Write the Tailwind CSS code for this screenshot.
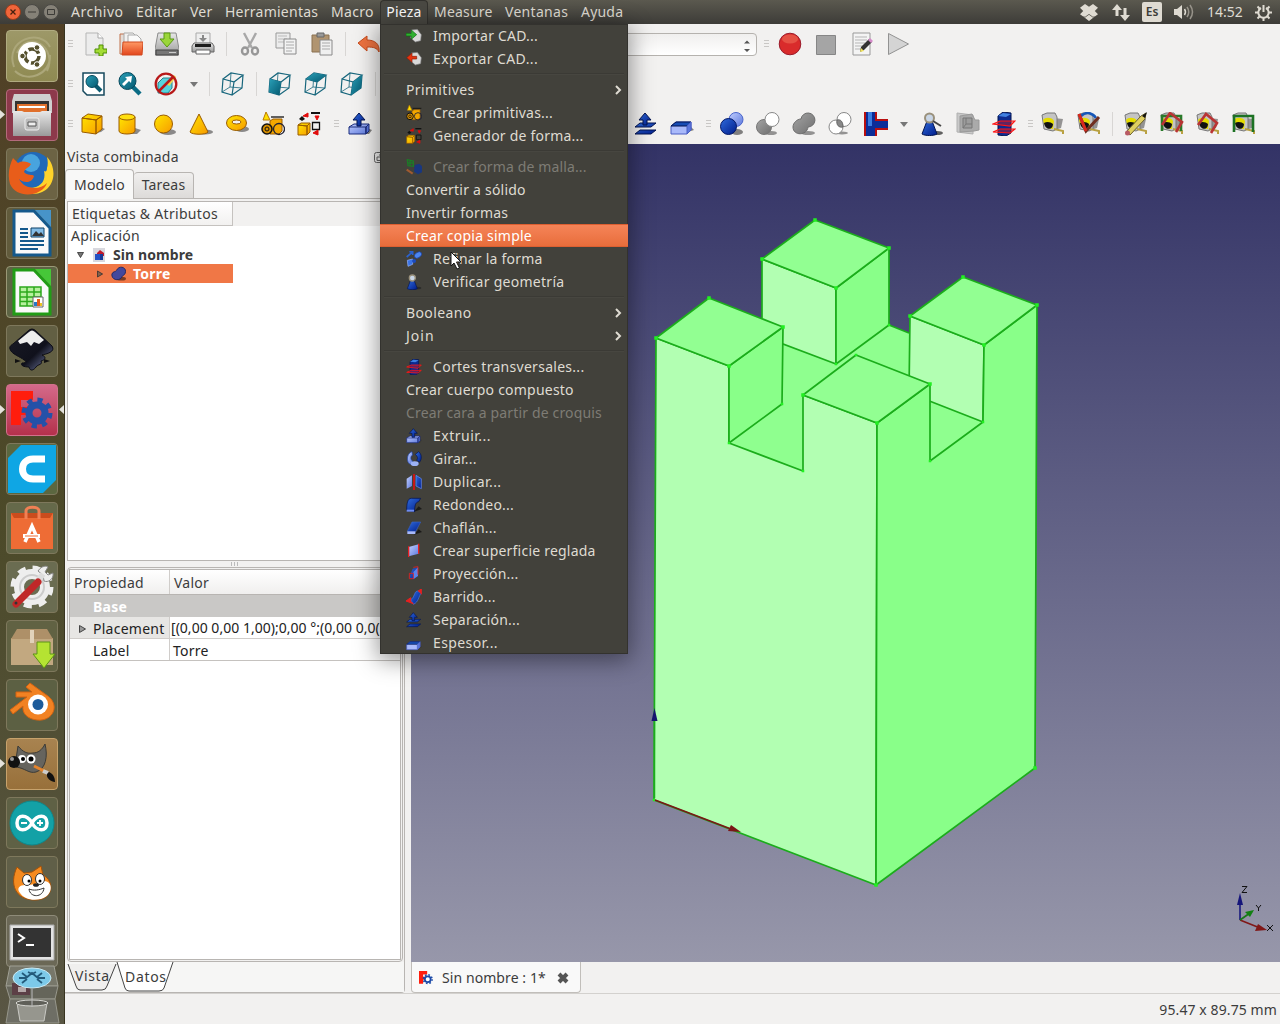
<!DOCTYPE html>
<html lang="es">
<head>
<meta charset="utf-8">
<title>FreeCAD</title>
<script src="https://cdn.jsdelivr.net/npm/@tailwindcss/browser@4"></script>
</head>
<body class="w-[1280px] h-[1024px] overflow-hidden bg-[#f2f1f0] text-[#3c3c3c] text-[14px] leading-[20px] font-['Noto_Sans',sans-serif] whitespace-nowrap">

<svg class="absolute size-0">
  <defs>
    <linearGradient id="gy" x1="0" y1="0" x2="1" y2="1"><stop offset="0" stop-color="#ffe600"/><stop offset="1" stop-color="#f79a00"/></linearGradient>
    <linearGradient id="gb" x1="0" y1="0" x2="1" y2="1"><stop offset="0" stop-color="#2f6bdc"/><stop offset="1" stop-color="#001c8a"/></linearGradient>
    <linearGradient id="gl" x1="0" y1="0" x2="1" y2="1"><stop offset="0" stop-color="#c3d0ff"/><stop offset="1" stop-color="#5a76dc"/></linearGradient>
    <linearGradient id="gg" x1="0" y1="0" x2="1" y2="1"><stop offset="0" stop-color="#a5a5a5"/><stop offset="1" stop-color="#6e6e6e"/></linearGradient>
    <linearGradient id="gt" x1="0" y1="0" x2="1" y2="1"><stop offset="0" stop-color="#2aa0b8"/><stop offset="1" stop-color="#04586f"/></linearGradient>
    <linearGradient id="go" x1="0" y1="0" x2="0" y2="1"><stop offset="0" stop-color="#ff9a66"/><stop offset="1" stop-color="#e2451c"/></linearGradient>
    <linearGradient id="gs" x1="0" y1="0" x2="0" y2="1"><stop offset="0" stop-color="#e8e8e8"/><stop offset="1" stop-color="#9a9a9a"/></linearGradient>
    <linearGradient id="gk" x1="0" y1="0" x2="1" y2="1"><stop offset="0" stop-color="#1a1b26"/><stop offset=".6" stop-color="#10111c"/><stop offset="1" stop-color="#7c86b4"/></linearGradient>
  </defs>
  <!-- file toolbar -->
  <symbol id="new" viewBox="0 0 24 24"><path d="M3 1h12l5 5v17H3z" fill="#ececec" stroke="#b5b5b5"/><path d="M15 1v5h5" fill="#fff" stroke="#a9a9a9"/><path d="M16 13h4v4h4v4h-4v3h-4v-3h-4v-4h4z" fill="#a4dc35" stroke="#4e8f05"/></symbol>
  <symbol id="open" viewBox="0 0 24 24"><path d="M1 22V2h6l2 3v17z" fill="#e4ddd8" stroke="#c1714a"/><path d="M5 1h9l4 4v15H5z" fill="#f2f2f2" stroke="#aaa"/><path d="M9 3h9l4 4v10H9z" fill="#fafafa" stroke="#aaa"/><path d="M4 10h20l-1 13H3z" fill="url(#go)" stroke="#d04a20"/></symbol>
  <symbol id="save" viewBox="0 0 24 24"><path d="M3 1h18l3 16v6H0v-6z" fill="url(#gs)" stroke="#8a8a8a"/><path d="M1 18h22v5H1z" fill="#777" stroke="#444"/><path d="M14 20.500h7" stroke="#ccc"/><path d="M9 1h6v6h4l-7 8-7-8h4z" fill="#9bd63a" stroke="#5a9a12"/></symbol>
  <symbol id="print" viewBox="0 0 24 24"><path d="M5 1h14v11H5z" fill="#eee" stroke="#aaa"/><path d="M11 3h2v3h3l-4 4-4-4h3z" fill="#888"/><path d="M3 11h18l2 3v6H1v-6z" fill="url(#gs)" stroke="#666"/><path d="M4 12h16v3H4z" fill="#1c1c1c"/><path d="M5 18h14v4H5z" fill="#fff" stroke="#666"/></symbol>
  <symbol id="cut" viewBox="0 0 24 24"><path d="M6 1l8 15M18 1l-8 15" stroke="#a8a8a8" stroke-width="2.400" fill="none"/><ellipse cx="7" cy="19" rx="3" ry="3.500" fill="none" stroke="#979797" stroke-width="2.400"/><ellipse cx="17" cy="19" rx="3" ry="3.500" fill="none" stroke="#979797" stroke-width="2.400"/></symbol>
  <symbol id="copy" viewBox="0 0 24 24"><path d="M2 1h14v15H2z" fill="#ececec" stroke="#999"/><path d="M4 4h9M4 7h9M4 10h9" stroke="#bbb"/><path d="M10 7h12v15H10z" fill="#f3f3f3" stroke="#8a8a8a"/><path d="M12 10h8M12 13h8M12 16h8M12 19h6" stroke="#aaa"/></symbol>
  <symbol id="paste" viewBox="0 0 24 24"><path d="M2 3h17v17H2z" fill="#b09470" stroke="#8a7050"/><path d="M7 1h7v4H7z" fill="#999" stroke="#666"/><path d="M10 8h12v15H10z" fill="#f0f0f0" stroke="#8a8a8a"/><path d="M12 11h8M12 14h8M12 17h8" stroke="#aaa"/></symbol>
  <symbol id="undo" viewBox="0 0 24 24"><path d="M1 11l9-7v4c8 0 13 4 12 12-2-4-5-5-12-5v4z" fill="#ee7340" stroke="#c94c1c"/></symbol>
  <symbol id="rec" viewBox="0 0 24 24"><circle cx="12" cy="12" r="10.800" fill="#d92b2b" stroke="#9b1b2b"/><ellipse cx="12" cy="7" rx="8" ry="4.500" fill="#ec6a55" opacity=".6"/></symbol>
  <symbol id="stop" viewBox="0 0 24 24"><path d="M2.500 3.500h19v19h-19z" fill="#a5a5a5" stroke="#868686"/></symbol>
  <symbol id="macro" viewBox="0 0 24 24"><path d="M3 1h17v22H3z" fill="#f4f4f4" stroke="#999"/><path d="M5 5h12M5 8h12M5 11h10M5 14h8M5 17h6" stroke="#b5b5b5"/><path d="M10 20l1-5 8-8 3 3-8 8z" fill="#333"/><path d="M10 20l1-4 3 3z" fill="#f1e35a"/><path d="M18 8l2-2 3 3-2 2z" fill="#d48ac8"/></symbol>
  <symbol id="play" viewBox="0 0 24 24"><path d="M2.500 1.500l20 10.500-20 10.500z" fill="#d4d4d4" stroke="#929292"/></symbol>
  <!-- view toolbar -->
  <symbol id="fitall" viewBox="0 0 24 24"><path d="M1 1h21v22H5l-4-4z" fill="#fff" stroke="#17495d" stroke-width="1.500"/><path d="M13 13l6 6" stroke="#0b5a70" stroke-width="4"/><circle cx="10" cy="9.500" r="6" fill="url(#gt)" stroke="#06485c"/></symbol>
  <symbol id="fitsel" viewBox="0 0 24 24"><path d="M14 14l8 8" stroke="#0b6c85" stroke-width="4.500"/><circle cx="9.500" cy="9" r="8.500" fill="url(#gt)" stroke="#06485c"/><path d="M4 12l5-5-2-2 7-1-1 7-2-2-5 5z" fill="#fff"/></symbol>
  <symbol id="nodraw" viewBox="0 0 24 24"><path d="M4 11l5-5h9v10l-4 5H4z" fill="#55d4dc" stroke="#2c7d88"/><path d="M14 13l7-9" stroke="#f4d34c" stroke-width="3"/><circle cx="12" cy="12" r="10.300" fill="none" stroke="#b81818" stroke-width="2.300"/><path d="M5 19L19 5" stroke="#b81818" stroke-width="2.500"/></symbol>
  <symbol id="axo" viewBox="0 0 24 24"><g fill="none" stroke="#17667c" stroke-width="1.200"><path d="M2 7l11 3-2 13-10-3zM2 7l8-6 12 2-9 7M22 3l-1 13-10 7"/><path d="M10 1l-1 14-8 5M9 15l12 1" stroke-width=".8"/></g></symbol>
  <symbol id="front" viewBox="0 0 24 24"><use href="#axo"/><path d="M2 7l11 3-2 13-10-3z" fill="url(#gt)"/></symbol>
  <symbol id="top" viewBox="0 0 24 24"><use href="#axo"/><path d="M2 7l8-6 12 2-9 7z" fill="url(#gt)"/></symbol>
  <symbol id="right" viewBox="0 0 24 24"><use href="#axo"/><path d="M13 10l9-7-1 13-10 7z" fill="url(#gt)"/></symbol>
  <!-- part toolbar -->
  <symbol id="box" viewBox="0 0 24 24"><path d="M10 22l10-2 4-3-5-2z" fill="#444" opacity=".6"/><path d="M1 6l14 2v14L1 20zM1 6l6-4 14 2-6 4zM15 8l6-4v13l-6 5z" fill="url(#gy)" stroke="#9a5c00" stroke-linejoin="round"/></symbol>
  <symbol id="cyl" viewBox="0 0 24 24"><path d="M12 22h8l4-4-6-2z" fill="#444" opacity=".6"/><path d="M2 5v14c0 4 16 4 16 0V5" fill="url(#gy)" stroke="#9a5c00"/><ellipse cx="10" cy="5" rx="8" ry="3" fill="#ffdf10" stroke="#9a5c00"/></symbol>
  <symbol id="sph" viewBox="0 0 24 24"><ellipse cx="15" cy="20" rx="8" ry="3" fill="#444" opacity=".6"/><circle cx="10.500" cy="12" r="9" fill="url(#gy)" stroke="#9a5c00"/></symbol>
  <symbol id="cone" viewBox="0 0 24 24"><ellipse cx="16" cy="20" rx="8" ry="2.500" fill="#444" opacity=".6"/><path d="M10 2l9 18c-2 3-16 3-18 0z" fill="url(#gy)" stroke="#9a5c00"/></symbol>
  <symbol id="torus" viewBox="0 0 24 24"><ellipse cx="17" cy="17" rx="7" ry="3" fill="#444" opacity=".6"/><ellipse cx="11.500" cy="11" rx="10" ry="7.500" fill="url(#gy)" stroke="#9a5c00"/><ellipse cx="11.500" cy="10" rx="4.500" ry="2" fill="#f2f1f0" stroke="#9a5c00"/></symbol>
  <symbol id="prims" viewBox="0 0 24 24"><path d="M9 9l3-2h9v12l-3 3H9z" fill="#f5a700" stroke="#9a5c00"/><path d="M5 0l4 8H2z" fill="#ffe000" stroke="#b87a00"/><path d="M10 5h13" stroke="#111" stroke-width="1.300"/><circle cx="6" cy="17" r="5" fill="#d48d00" stroke="#111" stroke-width="1.500"/><circle cx="6" cy="17" r="2" fill="none" stroke="#111"/><circle cx="18" cy="17" r="5.500" fill="none" stroke="#223" stroke-width="1.300"/></symbol>
  <symbol id="builder" viewBox="0 0 24 24"><path d="M1 13l9 1v9H1zM1 13l3-2h9l-3 3zM10 14l3-3v9l-3 3z" fill="url(#gy)" stroke="#9a5c00"/><path d="M2 7l3-3 3 3-3 2z" fill="#111"/><path d="M14 1h9" stroke="#111" stroke-width="2"/><path d="M15.500 10.500h7v7h-7z" fill="none" stroke="#111" stroke-width="1.300"/><path d="M6 4l5-3v4zM18 4h4l-2 4zM16 21l5-3v5z" fill="#e00c0c" stroke="#e00c0c"/></symbol>
  <symbol id="extr" viewBox="0 0 24 24"><path d="M14 22h7l3-4-5-2z" fill="#333" opacity=".6"/><path d="M1 15l5-3h15l-3 3v7H1z" fill="url(#gl)" stroke="#1b2c7c"/><path d="M18 22l3-3v-7l-3 3z" fill="#5a76dc" stroke="#1b2c7c"/><path d="M1 15h17v7" fill="none" stroke="#1b2c7c"/><path d="M9 14V8H5l6-7 6 7h-4v6z" fill="url(#gb)" stroke="#041550"/></symbol>
  <symbol id="offset" viewBox="0 0 24 24"><path d="M1 22l5-4h16l-5 4zM1 15l5-4h16l-5 4z" fill="url(#gb)" stroke="#041550"/><path d="M9 13V8H5l6-7 6 7h-4v5z" fill="url(#gb)" stroke="#041550"/></symbol>
  <symbol id="thick" viewBox="0 0 24 24"><path d="M15 21l9-3-4-4z" fill="#333" opacity=".6"/><path d="M1 14l5-4h15v8l-4 4H1z" fill="#a9b9fa" stroke="#4a5fc4"/><path d="M1 14l5-4h15l-4 4z" fill="#174cb4" stroke="#041550"/><path d="M17 14l4-4v8l-4 4z" fill="#5a76dc" stroke="#4a5fc4"/></symbol>
  <symbol id="bool" viewBox="0 0 24 24"><ellipse cx="17" cy="20" rx="6" ry="3" fill="#333" opacity=".6"/><circle cx="16" cy="7.500" r="7" fill="url(#gl)" stroke="#4a66cc"/><circle cx="8.500" cy="14.500" r="8" fill="url(#gb)" stroke="#031766"/></symbol>
  <symbol id="cutb" viewBox="0 0 24 24"><ellipse cx="15" cy="21" rx="6" ry="2" fill="#333" opacity=".5"/><circle cx="8" cy="15" r="7.500" fill="url(#gg)" stroke="#777"/><circle cx="16" cy="7.500" r="7" fill="#fff" stroke="#888"/></symbol>
  <symbol id="fuse" viewBox="0 0 24 24"><ellipse cx="16" cy="21" rx="7" ry="2" fill="#333" opacity=".5"/><path d="M9 7a7 7 0 1 1 7 8c-1 9-15 9-15 0 0-4 4-8 8-8z" fill="url(#gg)" stroke="#6c6c6c"/></symbol>
  <symbol id="common" viewBox="0 0 24 24"><ellipse cx="14" cy="21" rx="6" ry="1.500" fill="#333" opacity=".5"/><circle cx="16" cy="7.500" r="7" fill="#fff" stroke="#888"/><circle cx="8" cy="15" r="7" fill="#fff" stroke="#888"/><path d="M9 8c4-1 6 2 6 7-4 1-7-2-6-7z" fill="#888" stroke="#666"/></symbol>
  <symbol id="joinp" viewBox="0 0 24 24"><path d="M0 0h13v7h11v11H13v6H0z" fill="#b90f0f"/><path d="M2 9h22v7H2z" fill="#0c2d98"/><path d="M2 0h9v24H2z" fill="#0c2d98"/><path d="M4 0h4v14H4z" fill="#3a7ce0"/></symbol>
  <symbol id="check" viewBox="0 0 24 24"><ellipse cx="17" cy="21" rx="6" ry="2" fill="#222" opacity=".7"/><path d="M7 9h5l5 13c-3 2-12 2-15 0z" fill="url(#gb)" stroke="#041550"/><circle cx="9.500" cy="6" r="4.500" fill="#c9d6e6" stroke="#9a917c" stroke-width="2"/><path d="M13 9l8 5" stroke="#444" stroke-width="2"/></symbol>
  <symbol id="defeat" viewBox="0 0 24 24"><path d="M1 1l16 2v19L1 20z" fill="#c9c9c9" stroke="#b0b0b0"/><path d="M4 4l12-2 3 6h4v10l-5 1-14 1z" fill="#aaa" stroke="#999"/><path d="M7 6h9v10H7z" fill="#9c9c9c" stroke="#777"/><path d="M7 16l3-4V6M10 12h6" fill="none" stroke="#777"/></symbol>
  <symbol id="sect" viewBox="0 0 24 24"><path d="M6 4l5-4 8 1v20l-5 3-8-1z" fill="#0c2a90" stroke="#031550"/><path d="M6 4l5-3 8 1-5 3z" fill="#3f7fe0"/><path d="M1 12l7-3h15l-5 5zM1 20l7-3h15l-5 4z" fill="#e01818" fill-opacity=".4" stroke="#ff1414" stroke-width="1.200"/></symbol>
  <symbol id="tape" viewBox="0 0 24 24"><path d="M13 6l9 1-2 9-6 2z" fill="#555" opacity=".6"/><path d="M1 3l5-2h8l2 4v12l-4 2-9-2z" fill="#c4c4c4" stroke="#777"/><path d="M2 8c2-3 9-3 11 1l-1 8c-5 0-9-3-10-9z" fill="#e5dc00"/><path d="M3 11c3-2 7-1 9 1 0 7-8 6-9-1z" fill="#111"/><path d="M13 17l9 2v3" stroke="#b8a040" stroke-width="2" fill="none"/></symbol>
  <symbol id="tang" viewBox="0 0 24 24"><use href="#tape"/><path d="M4 4c5-5 12-3 15 2" fill="none" stroke="#1556b8" stroke-width="2.500"/><path d="M2 2l7 17L22 5" fill="none" stroke="#702e20" stroke-width="3"/><path d="M2 2l7 17" stroke="#d8281e" stroke-width="3"/></symbol>
  <symbol id="tpen" viewBox="0 0 24 24"><use href="#tape"/><path d="M2 20L17 4l5-3-1 6L6 23z" fill="#dfcf60" stroke="#6a602a"/><path d="M18 4l5-4-2 6z" fill="#111"/><circle cx="3.500" cy="21" r="2.500" fill="#b85a64"/></symbol>
  <symbol id="tgr" viewBox="0 0 24 24"><use href="#tape"/><path d="M2 19V4h19v15" fill="none" stroke="#2a7a2a" stroke-width="2.600"/><path d="M2 13L10 1l12 9-6 10" fill="none" stroke="#b93434" stroke-width="2.600"/></symbol>
  <symbol id="tr" viewBox="0 0 24 24"><use href="#tape"/><path d="M2 13L10 2l11 9-6 10" fill="none" stroke="#b93434" stroke-width="2.600"/></symbol>
  <symbol id="tg" viewBox="0 0 24 24"><use href="#tape"/><path d="M2 20V4h19v16" fill="none" stroke="#1d7224" stroke-width="2.600"/></symbol>
  <!-- menu-only -->
  <symbol id="imp" viewBox="0 0 24 24"><path d="M8 3l9-1 6 8-1 9-8 2-7-6z" fill="#d9d9d9" stroke="#777"/><path d="M0 8h8V3l8 7-8 7v-5H0z" fill="#2fb02f" stroke="#0e6a10"/></symbol>
  <symbol id="exp" viewBox="0 0 24 24"><path d="M8 3l9-1 6 8-1 9-8 2-7-6z" fill="#d9d9d9" stroke="#777"/><path d="M16 8H9V3L1 10l8 7v-5h7z" fill="#e6330f" stroke="#8a1c08"/></symbol>
  <symbol id="mesh" viewBox="0 0 24 24"><path d="M2 1l9 2v8l-8-1zM2 6h9M6 1v9" fill="none" stroke="#1d7a28" stroke-width="2"/><path d="M13 9l7-2 4 4v9l-6 3-6-4z" fill="#19377f"/><path d="M1 16l9 6" stroke="#a05a30" stroke-width="3"/></symbol>
  <symbol id="refine" viewBox="0 0 24 24"><path d="M1 9l8-7M5 1h5v5" stroke="#2a62d0" stroke-width="2.500" fill="none"/><ellipse cx="18" cy="6" rx="6" ry="4" transform="rotate(-35 18 6)" fill="#4c86f0" stroke="#1b3fa0"/><path d="M2 14l8-2v8l-7 3z" fill="#3b74e6" stroke="#9bb8ff"/><circle cx="12" cy="15" r="3" fill="#1b4bc0"/></symbol>
  <symbol id="revolve" viewBox="0 0 24 24"><path d="M9 1C0 3 0 20 8 20l2-5c-4-2-3-8 0-9z" fill="url(#gl)" stroke="#1b3fa0"/><path d="M14 5l5-4c5 4 5 12 1 16l-4-3c2-3 2-5-2-9z" fill="url(#gb)" stroke="#041550"/><ellipse cx="13" cy="19" rx="6" ry="3.500" fill="#9cb2f7"/></symbol>
  <symbol id="mirror" viewBox="0 0 24 24"><path d="M1 7l8-5v16l-8 4z" fill="url(#gl)"/><path d="M15 2l8 5v15l-8-4z" fill="url(#gb)" stroke="#6b92ff"/><path d="M12 0v24" stroke="#e01010" stroke-width="2.500"/></symbol>
  <symbol id="fillet" viewBox="0 0 24 24"><path d="M12 22l12-4-5-4z" fill="#111" opacity=".8"/><path d="M1 20c0-9 1-18 7-18h14l-3 5c-5 1-6 6-6 15z" fill="url(#gb)" stroke="#020e48"/><path d="M1 19h11v3H1z" fill="#6f8cf0"/></symbol>
  <symbol id="chamf" viewBox="0 0 24 24"><path d="M12 22l12-4-5-4z" fill="#111" opacity=".8"/><path d="M2 17L9 3h13l-8 15z" fill="url(#gb)" stroke="#3a60c0"/><path d="M2 17h12v4H2z" fill="#a8b9fb"/></symbol>
  <symbol id="ruled" viewBox="0 0 24 24"><path d="M4 6l15-4v14L4 20z" fill="url(#gl)"/><path d="M4 5v16M19 1v15" stroke="#e62020" stroke-width="2"/></symbol>
  <symbol id="loft" viewBox="0 0 24 24"><path d="M5 17l5-13 8-2v13l-7 5z" fill="url(#gb)"/><path d="M11 9l7-7v13l-7 5z" fill="#5b83ea"/><path d="M5 11v8h6v-8zM11 2l7-1v12" fill="none" stroke="#e62020" stroke-width="1.300"/></symbol>
  <symbol id="sweep" viewBox="0 0 24 24"><path d="M7 16c6-3 5-12 10-13l6 3c-4 4-4 14-12 17z" fill="url(#gb)" stroke="#4d78e0"/><path d="M0 18l7-5v6l4 3zM18 3l5-3v8" fill="#e62020" stroke="#e62020" stroke-width="1.500"/></symbol>
  <symbol id="handle" viewBox="0 0 5 8"><path d="M0 .500h5M0 3.500h5M0 6.500h5" stroke="#c9c7c5"/></symbol>
  <symbol id="chev" viewBox="0 0 8 10"><path d="M2 1l4 4-4 4" fill="none" stroke="#dfdbd2" stroke-width="2"/></symbol>
  <symbol id="fc" viewBox="0 0 24 24"><path d="M0 0h14v6H7v4h6v5H7v7H0z" fill="#ff1d0d"/><circle cx="15" cy="14" r="5" fill="#fff" stroke="#1b4aa8" stroke-width="3"/><circle cx="15" cy="14" r="7.500" fill="none" stroke="#1b4aa8" stroke-width="2.600" stroke-dasharray="2.900 3"/></symbol>
</svg>

<div class="relative flex h-[1024px] w-[1280px] flex-col">

  <!-- top panel -->
  <header class="flex h-6 shrink-0 items-center bg-linear-to-b from-[#5b594f] to-[#3d3c38] text-[#dfdbd2]">
    <div class="flex w-[71px] gap-[3px] pl-[5px]">
      <span class="flex size-4 items-center justify-center rounded-full border border-[#9a3c1b] bg-[#f0653a]"><svg class="size-2" viewBox="0 0 8 8"><path d="M1.500 1.500l5 5m0-5l-5 5" stroke="#45200f" stroke-width="1.300"/></svg></span>
      <span class="flex size-4 items-center justify-center rounded-full border border-[#4a4945] bg-[#858177]"><svg class="size-2" viewBox="0 0 8 8"><path d="M0 4h8" stroke="#3c3b37"/></svg></span>
      <span class="flex size-4 items-center justify-center rounded-full border border-[#4a4945] bg-[#858177]"><svg class="size-2" viewBox="0 0 8 8"><path d="M.5 1.500h7v5h-7z" fill="none" stroke="#3c3b37"/></svg></span>
    </div>
    <span class="w-[65px] tracking-[0.5px]">Archivo</span><span class="w-[54px] tracking-[0.4px]">Editar</span><span class="w-[35px] tracking-[0.2px]">Ver</span><span class="w-[106px] tracking-[0.25px]">Herramientas</span><span class="w-[49px] tracking-[0.3px]">Macro</span>
    <span class="flex h-6 w-12 items-center justify-center rounded-t border border-b-0 border-[#33322e] bg-[#4a4943] pb-px tracking-[0.2px] text-white">Pieza</span>
    <span class="ml-1.5 w-[71px] tracking-[0.2px]">Measure</span><span class="w-[76px] tracking-[0.3px]">Ventanas</span><span class="tracking-[0.2px]">Ayuda</span>
    <div class="ml-auto flex items-center pr-2">
      <svg class="h-[17px] w-[18px]" viewBox="0 0 18 17"><path d="M5 0l4 2.700L13 0l5 3.700L14.800 7 18 10.300l-3.500 2.500L9 17l-5.500-4.200L0 10.300 3.200 7 0 3.700z" fill="#dfdbd2"/><path d="M3.500 12.500L5 13.300l4-3 4 3 1.500-.8" fill="none" stroke="#504e46" stroke-width=".8"/></svg>
      <svg class="ml-3.5 h-[17px] w-[18px]" viewBox="0 0 18 17"><path d="M3.500 12V6H0l5-6 5 6H6.500v6zM11.500 4v7H8l5 6 5-6h-3.500V4z" fill="#dfdbd2"/></svg>
      <span class="ml-3 flex h-5 w-5 items-center justify-center rounded-xs bg-[#dfdbd2] text-[12px] font-semibold text-[#3c3b37]">Es</span>
      <svg class="ml-3 h-4 w-5" viewBox="0 0 20 16"><path d="M0 5h3l5-4v14l-5-4H0z" fill="#dfdbd2"/><path d="M10.500 5q2 3 0 6" stroke="#dfdbd2" stroke-width="1.500" fill="none"/><path d="M13 3q3.500 5 0 10M16 1q5 7 0 14" stroke="#97938a" stroke-width="1.500" fill="none"/></svg>
      <span class="ml-[13px] w-[48px]">14:52</span>
      <svg class="h-[17px] w-[17px]" viewBox="0 0 17 17"><path d="M6 4a5.200 5.200 0 1 0 5 0" fill="none" stroke="#dfdbd2" stroke-width="2"/><path d="M8.500 1v7M2.500 2.500l2 2M14.500 2.500l-2 2M0 8.500h3M17 8.500h-3M2.500 14.500l2-2M14.500 14.500l-2-2M8.500 17v-3" fill="none" stroke="#dfdbd2" stroke-width="2"/></svg>
    </div>
  </header>

  <div class="flex min-h-0 flex-1">
    <!-- launcher -->
    <aside class="relative flex w-[65px] shrink-0 flex-col items-center gap-[7px] border-r border-[#383420] bg-linear-to-b from-[#514026] via-[#4c4a29] to-[#595644] pt-1.5 pr-px">
      <div class="flex size-[52px] items-center justify-center rounded border border-[#b0ab80] bg-linear-to-b from-[#9d9868] to-[#8f8a52]"><svg class="size-[50px]" viewBox="0 0 50 50"><path d="M7 36C-3 8 34-3 43 16M10 22C22-3 51 17 40 40M8 40C20 52 44 44 43 24" fill="none" stroke="#aca77a" stroke-width="2"/><circle cx="25" cy="25" r="14" fill="#fff"/><circle cx="25" cy="25" r="7" fill="none" stroke="#55502e" stroke-width="3.500" stroke-dasharray="12 2.600"/><g fill="#55502e" stroke="#fff"><circle cx="15.500" cy="25" r="2.800"/><circle cx="30" cy="16.500" r="2.800"/><circle cx="30" cy="33.500" r="2.800"/></g></svg></div>
      <div class="flex size-[52px] items-center justify-center rounded border border-[#b36a7b] bg-[#8d394b]"><svg class="size-[50px]" viewBox="0 0 50 50"><path d="M7 4h36l2 7v12H5V11z" fill="#cfcfcf"/><path d="M8 11h34v11H8z" fill="#333"/><path d="M10 14h30v8H10z" fill="#e0702c"/><path d="M12 16h26v2H12z" fill="#fff"/><path d="M6 21h9l2 1h16l2-1h9v25H6z" fill="url(#gs)"/><rect x="18" y="28" width="14" height="12" rx="2" fill="#bbb" stroke="#eee"/><path d="M21 32h8v4h-8z" fill="#eee" stroke="#555"/></svg></div>
      <div class="flex size-[52px] items-center justify-center rounded border border-[#7e785c] bg-[#6c6344]"><svg class="size-[50px]" viewBox="0 0 50 50"><circle cx="26" cy="22" r="19" fill="#2169b8"/><circle cx="24" cy="14" r="9" fill="#48a4de"/><path d="M40 8c11 11 9 36-14 37l-4-6c13 0 17-9 15-17 2 1 3 0 3-3 1-3 1-7 0-11z" fill="#ffd32a"/><path d="M6 9l5 5c5-3 10-1 13 1-2 4-6 4-7 8 3 4 9 2 10 4-2 8-11 7-15 3 5 10 20 12 28 4-4 13-30 17-37 1C0 25 3 15 6 9z" fill="#e85d1a"/></svg></div>
      <div class="flex size-[52px] items-center justify-center rounded border border-[#7e785c] bg-[#615b3c]"><svg class="size-[50px]" viewBox="0 0 50 50"><path d="M7 3h20l16 17v27H7z" fill="#fafafa" stroke="#15598c" stroke-width="3"/><path d="M28 2h16v17z" fill="#4794c9"/><g stroke="#15598c" stroke-width="2"><path d="M13 21h8M13 25h8M13 29h8M13 33h24M13 37h24M13 41h18"/></g><path d="M24 20h13v9H24z" fill="#83bce6" stroke="#0c4066"/><path d="M25 28l4-5 3 3 2-2 3 4z" fill="#333"/></svg></div>
      <div class="flex size-[52px] items-center justify-center rounded border border-[#9a9877] bg-[#5d6444]"><svg class="size-[50px]" viewBox="0 0 50 50"><path d="M7 3h20l16 17v27H7z" fill="#fafafa" stroke="#219c16" stroke-width="3"/><path d="M28 2h16v17z" fill="#46c738"/><path d="M13 20h21v19H13zM13 25h21M13 30h21M13 34.500h21M20 20v19M27 20v19" fill="#b6f09e" stroke="#2ca81c" stroke-width="1.500"/><path d="M26 30h10v10H26z" fill="#fff" stroke="#666"/><path d="M27 35h3v4h-3z" fill="#2878c8"/><path d="M30 32h3v7h-3z" fill="#e85d1a"/><path d="M33 36h2v3h-2z" fill="#edc523"/></svg></div>
      <div class="flex size-[52px] items-center justify-center rounded border border-[#7e785c] bg-[#625f43]"><svg class="size-[50px]" viewBox="0 0 50 50"><path d="M21 5q4-4 8 0l16 15c4 6-6 8-10 9 5 2 3 5-1 6 2 4-3 3-5 6s-6 5-7 0c-4 0-9-1-7-4 4 0 5-2 2-3-3-3-13-6-14-11-1-2 1-4 3-5z" fill="url(#gk)" stroke="#0c0d16"/><path d="M22 6q3-3 6 0l9 8-5 4-5-2-3 4-4-4-7 2-2-3z" fill="#eee"/><path d="M37 33l6 2-6 2zM8 33l6 2-6 2z" fill="#111"/></svg></div>
      <div class="flex size-[52px] items-center justify-center rounded border border-[#d1708c] bg-linear-to-b from-[#d4698a] to-[#b4304c]"><svg class="size-[46px]" viewBox="0 0 46 46"><path d="M2 4h22v9H12v7h10v8H12v10H2z" fill="#ff1d0d"/><circle cx="28" cy="26" r="8" fill="none" stroke="#2451a8" stroke-width="7"/><circle cx="28" cy="26" r="13" fill="none" stroke="#2451a8" stroke-width="5" stroke-dasharray="5.100 5.110"/></svg></div>
      <div class="flex size-[52px] items-center justify-center rounded border border-[#7e785c] bg-[#5b6740]"><svg class="size-[50px]" viewBox="0 0 50 50"><path d="M14 1h35v35L36 49H1V14z" fill="#0fa6e4"/><path d="M38 15H26c-14 0-14 20 0 20h12" fill="none" stroke="#fff" stroke-width="7"/></svg></div>
      <div class="flex size-[52px] items-center justify-center rounded border border-[#7e785c] bg-[#65694a]"><svg class="size-[50px]" viewBox="0 0 50 50"><path d="M4 10h42v36H4z" fill="#ee6c35"/><path d="M4 10h42l-3 5H7z" fill="#ca4c1d"/><path d="M19 16V8c0-5 13-5 13 0v8" fill="none" stroke="#f08054" stroke-width="3"/><path d="M18 39l7-16 7 16" fill="none" stroke="#fff" stroke-width="3.500"/><path d="M16 33h17" stroke="#fff" stroke-width="4"/><path d="M18 33h13" stroke="#ee6c35"/></svg></div>
      <div class="flex size-[52px] items-center justify-center rounded border border-[#7e785c] bg-[#6a6c51]"><svg class="size-[50px]" viewBox="0 0 50 50"><circle cx="25" cy="25" r="13" fill="none" stroke="#eee" stroke-width="10"/><circle cx="25" cy="25" r="19" fill="none" stroke="#eee" stroke-width="5" stroke-dasharray="8 6.920"/><circle cx="25" cy="25" r="12" fill="none" stroke="#ccc" stroke-width="2"/><path d="M36 13l-5-4c4-6 9-5 10-4l-3 5 3 3 5-2c1 6-5 10-9 8z" fill="#eee" stroke="#888"/><path d="M36 12l-6 8" stroke="#ddd" stroke-width="6"/><path d="M31 20L9 42" stroke="#c02828" stroke-width="7" stroke-linecap="round"/><circle cx="9" cy="41" r="1.500" fill="#333"/></svg></div>
      <div class="flex size-[52px] items-center justify-center rounded border border-[#7e785c] bg-[#616243]"><svg class="size-[50px]" viewBox="0 0 50 50"><path d="M4 17h42v27H4z" fill="#c2a880"/><path d="M10 8h30l6 10H4z" fill="#ae9068"/><path d="M23 9h4v13h-4z" fill="#e1d2ba"/><path d="M30 21h13v12h5L37 47 26 33h4z" fill="#b5e332" stroke="#5c9416"/></svg></div>
      <div class="flex size-[52px] items-center justify-center rounded border border-[#7e785c] bg-[#5c6043]"><svg class="size-[50px]" viewBox="0 0 50 50"><path d="M3 30l17-13H9v-5h16l-6-5 4-4 15 11c17 10 8 28-8 26-10-1-15-7-14-14L6 34z" fill="#f28222" stroke="#d56310"/><circle cx="31" cy="24.500" r="10" fill="#fff"/><circle cx="31" cy="24.500" r="5.500" fill="#1d5b9a"/></svg></div>
      <div class="flex size-[52px] items-center justify-center rounded border border-[#c7a26c] bg-linear-to-b from-[#a88350] to-[#98703a]"><svg class="size-[50px]" viewBox="0 0 50 50"><path d="M9 20l2-13c5 6 9 8 15 7 5 0 9-3 12-9 3 12 1 25-9 28-7 2-11-4-20-5z" fill="#66645e" stroke="#3c3b37"/><circle cx="15" cy="20" r="4" fill="#fff"/><circle cx="24" cy="20" r="4.500" fill="#fff"/><circle cx="16" cy="20" r="2"/><circle cx="24" cy="20" r="2.500"/><ellipse cx="7" cy="23" rx="6" ry="6" fill="#111"/><circle cx="5" cy="20" r="2" fill="#999"/><path d="M27 27l12 6" stroke="#e6842c" stroke-width="3"/><path d="M36 32l5 2" stroke="#ccc" stroke-width="4"/><path d="M42 33c5 2 6 7 6 10-4 0-9-4-8-8z" fill="#111"/></svg></div>
      <div class="flex size-[52px] items-center justify-center rounded border border-[#7e785c] bg-[#5f6145]"><svg class="size-[50px]" viewBox="0 0 50 50"><circle cx="25" cy="25" r="22" fill="#13a1a6" stroke="#0b8a8f"/><path d="M25 25c-5-9-15-9-15 0s10 9 15 0 15-9 15 0-10 9-15 0z" fill="none" stroke="#fff" stroke-width="3.500"/><path d="M14 25h6M30 25h6M33 22v6" stroke="#fff" stroke-width="1.800"/></svg></div>
      <div class="flex size-[52px] items-center justify-center rounded border border-[#7e785c] bg-[#605f48]"><svg class="size-[50px]" viewBox="0 0 50 50"><path d="M10 10l7 6 8-1 9-6 2 9c12 6 11 25-8 25-20 0-26-16-18-33z" fill="#f58a1f" stroke="#a3520a"/><path d="M13 36c-4-5 0-8 5-8 8 0 15-2 19-4 10 0 9 15-3 18-9 2-17 0-21-6z" fill="#fff"/><ellipse cx="20" cy="23" rx="4.500" ry="5.500" fill="#fff" stroke="#333"/><ellipse cx="33" cy="22" rx="4.500" ry="5.500" fill="#fff" stroke="#333"/><circle cx="22" cy="24" r="1.500"/><circle cx="33" cy="24" r="1.500"/><ellipse cx="29" cy="28" rx="3" ry="1.800" fill="#222"/><path d="M22 32c5 2 10 1 15-1-1 10-14 10-15 1z" fill="#fff" stroke="#333"/></svg></div>
      <div class="flex size-[52px] shrink-0 items-center justify-center rounded border border-[#8e8b79] bg-[#6b6856]"><svg class="size-[50px]" viewBox="0 0 50 50"><path d="M3 9h44v35H3z" fill="#e3e3e3" stroke="#aaa"/><path d="M6 12h38v29H6z" fill="#333"/><path d="M11 18l6 4-6 4" fill="none" stroke="#fff" stroke-width="2"/><path d="M19 29h8" stroke="#fff" stroke-width="2"/></svg></div>
      <!-- folded stack -->
      <svg class="absolute top-[941px] left-0 h-[59px] w-[65px]" viewBox="0 0 65 59"><path d="M10 1h44l4 20H6z" fill="#77776a" stroke="#a0a094"/><path d="M6 21h52l-3 13H10z" fill="#65655a" stroke="#97978c"/><path d="M10 34h45l4 24H6z" fill="#6e6e65" stroke="#97978c"/><path d="M12 18h18v12H12z" fill="#5c3f46"/><path d="M18 22h8v5h-8z" fill="#b5a8a8"/><ellipse cx="32" cy="13" rx="19" ry="10" fill="#7cc9e8" stroke="#c9eaf5"/><path d="M19 13h7l6-5 6 5h7M22 8l5 4M42 8l-5 4M22 18l5-4M42 18l-5-4M28 7l4 2 4-2" fill="none" stroke="#235a7a" stroke-width="1.800"/><path d="M17 38h30l-3 18H20z" fill="#96968e" stroke="#c9c9c4"/><ellipse cx="32" cy="38" rx="16" ry="3" fill="#5f5f58" stroke="#d5d5d0"/><path d="M32 24v18" stroke="#bbb"/></svg>
      <!-- running and focused arrows -->
      <svg class="absolute top-0 left-0 h-[1000px] w-[65px]" viewBox="0 0 65 1000"><path d="M0 86l5 4.500-5 4.500zM0 381l5 4.500-5 4.500zM0 735l5 4.500-5 4.500zM64 381l-5 4.500 5 4.500z" fill="#e4e2dc"/></svg>
    </aside>

    <div class="flex min-w-0 flex-1 flex-col">
      <!-- toolbars -->
      <div class="flex h-10 shrink-0 items-center">
        <svg class="ml-[3px] mr-1 h-2 w-[5px]"><use href="#handle"/></svg>
        <div class="flex"><span class="flex w-9 justify-center"><svg class="size-6"><use href="#new"/></svg></span><span class="flex w-9 justify-center"><svg class="size-6"><use href="#open"/></svg></span><span class="flex w-9 justify-center"><svg class="size-6"><use href="#save"/></svg></span><span class="flex w-9 justify-center"><svg class="size-6"><use href="#print"/></svg></span></div>
        <span class="mx-[5px] h-6 w-px bg-[#d8d6d4]"></span>
        <div class="flex"><span class="flex w-9 justify-center"><svg class="size-6"><use href="#cut"/></svg></span><span class="flex w-9 justify-center"><svg class="size-6"><use href="#copy"/></svg></span><span class="flex w-9 justify-center"><svg class="size-6"><use href="#paste"/></svg></span></div>
        <span class="mx-[5px] h-6 w-px bg-[#d8d6d4]"></span>
        <span class="flex w-9 justify-center"><svg class="size-6"><use href="#undo"/></svg></span>
        <div class="ml-auto flex h-[23px] w-[160px] items-center justify-end rounded border border-[#b5b2ae] bg-linear-to-b from-[#f0efee] to-white pr-1.5"><svg class="mt-1 h-3 w-1.5" viewBox="0 0 6 12"><path d="M0 3.500l3-3 3 3zM0 9l3 3 3-3z" fill="#555"/></svg></div>
        <svg class="ml-[7px] mr-[3px] h-2 w-[5px]"><use href="#handle"/></svg>
        <div class="mr-[364px] flex"><span class="flex w-9 justify-center"><svg class="size-6"><use href="#rec"/></svg></span><span class="flex w-9 justify-center"><svg class="size-6"><use href="#stop"/></svg></span><span class="flex w-9 justify-center"><svg class="size-6"><use href="#macro"/></svg></span><span class="flex w-9 justify-center"><svg class="size-6"><use href="#play"/></svg></span></div>
      </div>
      <div class="flex h-10 shrink-0 items-center">
        <svg class="ml-[3px] mr-[3px] h-2 w-[5px]"><use href="#handle"/></svg>
        <div class="flex"><span class="flex w-9 justify-center"><svg class="size-6"><use href="#fitall"/></svg></span><span class="flex w-9 justify-center"><svg class="size-6"><use href="#fitsel"/></svg></span><span class="flex w-9 justify-center"><svg class="size-6"><use href="#nodraw"/></svg></span></div>
        <svg class="mx-[6px] h-[5px] w-2" viewBox="0 0 8 5"><path d="M0 0h8L4 5z" fill="#777"/></svg>
        <span class="mx-[5px] h-6 w-px bg-[#d8d6d4]"></span>
        <span class="flex w-9 justify-center"><svg class="size-6"><use href="#axo"/></svg></span>
        <span class="mx-[5px] h-6 w-px bg-[#d8d6d4]"></span>
        <div class="flex"><span class="flex w-9 justify-center"><svg class="size-6"><use href="#front"/></svg></span><span class="flex w-9 justify-center"><svg class="size-6"><use href="#top"/></svg></span><span class="flex w-9 justify-center"><svg class="size-6"><use href="#right"/></svg></span></div>
        <span class="mx-[5px] h-6 w-px bg-[#d8d6d4]"></span>
      </div>
      <div class="flex h-10 shrink-0 items-center">
        <svg class="ml-[3px] mr-[2px] h-2 w-[5px]"><use href="#handle"/></svg>
        <div class="flex"><span class="flex w-9 justify-center"><svg class="size-6"><use href="#box"/></svg></span><span class="flex w-9 justify-center"><svg class="size-6"><use href="#cyl"/></svg></span><span class="flex w-9 justify-center"><svg class="size-6"><use href="#sph"/></svg></span><span class="flex w-9 justify-center"><svg class="size-6"><use href="#cone"/></svg></span><span class="flex w-9 justify-center"><svg class="size-6"><use href="#torus"/></svg></span><span class="flex w-9 justify-center"><svg class="size-6"><use href="#prims"/></svg></span><span class="flex w-9 justify-center"><svg class="size-6"><use href="#builder"/></svg></span></div>
        <svg class="mr-[3px] ml-[7px] h-2 w-[5px]"><use href="#handle"/></svg>
        <span class="flex w-9 justify-center"><svg class="size-6"><use href="#extr"/></svg></span>
        <div class="ml-auto flex"><span class="flex w-9 justify-center"><svg class="size-6"><use href="#offset"/></svg></span><span class="flex w-9 justify-center"><svg class="size-6"><use href="#thick"/></svg></span></div>
        <svg class="ml-[6px] mr-[3px] h-2 w-[5px]"><use href="#handle"/></svg>
        <div class="flex"><span class="flex w-9 justify-center"><svg class="size-6"><use href="#bool"/></svg></span><span class="flex w-9 justify-center"><svg class="size-6"><use href="#cutb"/></svg></span><span class="flex w-9 justify-center"><svg class="size-6"><use href="#fuse"/></svg></span><span class="flex w-9 justify-center"><svg class="size-6"><use href="#common"/></svg></span><span class="flex w-9 justify-center"><svg class="size-6"><use href="#joinp"/></svg></span></div>
        <svg class="mx-[6px] h-[5px] w-2" viewBox="0 0 8 5"><path d="M0 0h8L4 5z" fill="#777"/></svg>
        <div class="flex"><span class="flex w-9 justify-center"><svg class="size-6"><use href="#check"/></svg></span><span class="flex w-9 justify-center"><svg class="size-6"><use href="#defeat"/></svg></span><span class="flex w-9 justify-center"><svg class="size-6"><use href="#sect"/></svg></span></div>
        <svg class="ml-[6px] mr-[2px] h-2 w-[5px]"><use href="#handle"/></svg>
        <div class="flex"><span class="flex w-9 justify-center"><svg class="size-6"><use href="#tape"/></svg></span><span class="flex w-9 justify-center"><svg class="size-6"><use href="#tang"/></svg></span></div>
        <span class="mx-[5px] h-6 w-px bg-[#d8d6d4]"></span>
        <div class="mr-[18px] flex"><span class="flex w-9 justify-center"><svg class="size-6"><use href="#tpen"/></svg></span><span class="flex w-9 justify-center"><svg class="size-6"><use href="#tgr"/></svg></span><span class="flex w-9 justify-center"><svg class="size-6"><use href="#tr"/></svg></span><span class="flex w-9 justify-center"><svg class="size-6"><use href="#tg"/></svg></span></div>
      </div>

      <div class="flex h-[850px] shrink-0 border-b border-[#d3d1ce]">
        <!-- combined view -->
        <section class="flex w-[340px] shrink-0 flex-col rounded-br border-r border-b border-[#b8b5b2]">
          <div class="flex h-[25px] shrink-0 items-center justify-between pt-px pr-[19px] pl-0.5 tracking-[0.2px]"><span>Vista combinada</span><svg class="size-[11px]" viewBox="0 0 11 11"><rect x=".5" y=".5" width="10" height="10" rx="2" fill="none" stroke="#666"/><path d="M3 5h4v3.500H3zM5 3h3.500v4" fill="none" stroke="#666"/></svg></div>
          <div class="flex h-[30px] shrink-0 items-end">
            <span class="flex h-[30px] w-[69px] items-center justify-center rounded-t border border-b-0 border-[#b8b5b2] bg-[#f8f8f7] tracking-[0.2px]">Modelo</span>
            <span class="flex h-[27px] w-[60px] items-center justify-center rounded-t border border-l-0 border-[#b8b5b2] bg-linear-to-b from-[#f0efee] to-[#dddbd9] pb-px tracking-[0.2px]">Tareas</span>
            <span class="h-px flex-1 bg-[#b8b5b2]"></span>
          </div>
          <div class="mt-0.5 ml-0.5 flex h-[360px] w-[334px] shrink-0 flex-col border border-[#b8b5b2] bg-white">
            <div class="flex h-6 shrink-0 bg-[#f2f1f0]"><span class="flex h-6 w-[165px] items-center border-r border-b border-[#c5c2bf] bg-linear-to-b from-white to-[#f2f1f0] pt-px pl-1 tracking-[0.3px]">Etiquetas &amp; Atributos</span></div>
            <div class="flex h-[19px] items-center pl-[3px] tracking-[0.2px]">Aplicación</div>
            <div class="flex h-[19px] items-center pl-[9px] font-bold tracking-[0.08px]"><svg class="h-[6px] w-[7px]" viewBox="0 0 8 7"><path d="M.5.500h7L4 6.500z" fill="#777" stroke="#333"/></svg><svg class="mr-2 ml-[9px] h-3.5 w-3" viewBox="0 0 12 14"><path d="M0 0h12v14H0z" fill="#d8d8de"/><path d="M4 5l3-3 4 3v3H4z" fill="#c01a2c"/><path d="M2 6h7v6H2z" fill="#2452c4"/><path d="M7 6h3v6H7z" fill="#173a98"/></svg>Sin nombre</div>
            <div class="flex h-[19px] w-[165px] items-center bg-[#f07746] pl-[29px] font-bold tracking-[0.2px] text-white"><svg class="h-[8px] w-[6px]" viewBox="0 0 7 8"><path d="M.5.500v7L6.500 4z" fill="#86604a" stroke="#333"/></svg><svg class="mr-[7px] ml-2 h-4 w-[15px]" viewBox="0 0 16 16"><ellipse cx="11" cy="13" rx="5" ry="2" fill="#7a3c22"/><path d="M6 4c2-5 10-4 9.500 1.500C15 10 12 9 11 12c-3 4-11 2-10-4 1-3 4-2 5-4z" fill="#44489c" stroke="#232862"/></svg>Torre</div>
          </div>
          <div class="flex h-[6px] shrink-0 items-center justify-center gap-[2px]"><span class="h-1 w-px bg-[#bbb]"></span><span class="h-1 w-px bg-[#bbb]"></span><span class="h-1 w-px bg-[#bbb]"></span></div>
          <div class="ml-0.5 flex h-[395px] w-[336px] shrink-0 flex-col rounded-sm border border-[#b8b5b2] p-px">
            <div class="flex flex-1 flex-col border border-[#b8b5b2] bg-white tracking-[0.25px] text-[#222]">
              <div class="flex h-[25px] shrink-0 border-b border-[#b8b5b2] bg-linear-to-b from-white to-[#f0efee] text-[#3c3c3c]"><span class="flex w-[100px] items-center border-r border-[#d0cdca] pt-px pl-1 tracking-[0.25px]">Propiedad</span><span class="flex items-center pt-px pl-1">Valor</span></div>
              <div class="flex h-[22px] shrink-0 items-center bg-[#c9c8c6] pt-0.5 pl-[23px] font-bold text-white">Base</div>
              <div class="flex h-[22px] shrink-0 items-stretch"><span class="flex w-[100px] items-center border-r border-b border-[#d0cdca] bg-[#e7e6e4] pt-0.5 pl-[9px]"><svg class="mr-[7px] h-[8px] w-[7px] shrink-0" viewBox="0 0 7 8"><path d="M.5.500v7L6.500 4z" fill="#999" stroke="#444"/></svg>Placement</span><span class="flex w-[230px] items-center border-b border-[#d0cdca] pl-px tracking-[0.02px]">[(0,00 0,00 1,00);0,00 °;(0,00 0,0(</span></div>
              <div class="ml-5 flex h-[22px] items-center border-b border-[#c5c2bf]"><span class="flex h-full w-[80px] items-center border-r border-[#d0cdca] pt-0.5 pl-[3px]">Label</span><span class="pt-0.5 pl-[3px]">Torre</span></div>
            </div>
          </div>
          <div class="flex flex-1 bg-[#f6f6f5] pl-0.5">
            <svg class="h-[30px] w-[110px]" viewBox="0 0 110 30"><path d="M1 2l8 22q1 4 4 4h22q4 0 5-4l9-22" fill="#f0efee" stroke="#444"/><path d="M50 0l8 26q1 3 4 3h30q4 0 5-3l9-26" fill="#fff" stroke="#444"/><g fill="#3c3c3c" font-family="Noto Sans" font-size="14"><text x="8" y="19" textLength="34">Vista</text><text x="58" y="20" textLength="41">Datos</text></g></svg>
          </div>
        </section>

        <!-- 3D view -->
        <main class="ml-[6px] flex flex-1 flex-col">
          <svg class="h-[818px] w-[869px] shrink-0" viewBox="411 144 869 818">
            <defs><linearGradient id="sky" x1="0" y1="0" x2="0" y2="1"><stop offset="0" stop-color="#333366"/><stop offset="1" stop-color="#9797aa"/></linearGradient></defs>
            <path d="M411 144h869v818H411z" fill="url(#sky)"/>
            <g stroke="#1bad1b" stroke-width="1.700" stroke-linejoin="round">
              <path d="M783 327L836 345 889 325 909 333 984 345V422L930 461 877 480 803 471 729 443z" fill="#8fff8f" stroke="none"/>
              <path d="M889 325l20 8v70h-73v-39z" fill="#8fff8f" stroke="none"/>
              <path d="M889 325l20 8" fill="none"/>
              <path d="M762 259l74 29v76l-74-28z" fill="#b2ffb2"/>
              <path d="M836 288l53-40v77l-53 39z" fill="#89ff89"/>
              <path d="M815 220l74 28-53 40-74-29z" fill="#92ff92"/>
              <path d="M910 316l74 29-1 77-74-29z" fill="#b2ffb2"/>
              <path d="M656 338l73 28v77l74 28v-76l74 28-1 462-222-85z" fill="#b2ffb2"/>
              <path d="M877 423l53-39v77l53-39 1-77 53-40-2 463-159 117z" fill="#89ff89"/>
              <path d="M963 277l74 28-53 40-74-29z" fill="#92ff92"/>
              <path d="M729 366l54-39-1 77-53 39z" fill="#89ff89"/>
              <path d="M709 298l74 29-54 39-73-28z" fill="#92ff92"/>
              <path d="M856 355l74 29-53 39-74-28z" fill="#92ff92"/>
            </g>
            <path d="M815 220h0M889 248h0M836 288h0M762 259h0M963 277h0M1037 305h0M984 345h0M910 316h0M709 298h0M783 327h0M729 366h0M656 338h0M930 384h0M877 423h0M803 395h0M876 885h0M1035 768h0" stroke="#22f022" stroke-width="3.500" stroke-linecap="square"/>
            <path d="M782 404h0M729 443h0M803 471h0M930 461h0M983 422h0M836 364h0M889 325h0M856 355h0M654 800h0" stroke="#22f022" stroke-width="2.500" stroke-linecap="square"/>
            <path d="M654.500 798v-80" stroke="#1bad1b" stroke-width="1.500"/><path d="M654.500 708l3 13h-6z" fill="#15156e"/>
            <path d="M655 800l76 29" stroke="#7a1616" stroke-width="1.700"/><path d="M741 832l-13-1 3-6z" fill="#7a1616"/>
            <g stroke-width="1.700"><path d="M1240 920v-20" stroke="#202080"/><path d="M1240 920l20 8" stroke="#801818"/><path d="M1240 920l10-7" stroke="#187818"/></g>
            <path d="M1240 893l3 12h-6z" fill="#15157a"/><path d="M1267 930l-12 1 3-7z" fill="#801818"/><path d="M1254 910l-4 7-5-5z" fill="#128012"/>
            <g fill="none" stroke="#111"><path d="M1242 886.500h5l-5 6h5M1256 905l2.500 3 2.500-3M1258.500 908v3M1267 925l6 6M1273 925l-6 6"/></g>
          </svg>
          <div class="flex h-8 w-[170px] items-center rounded-b border border-t-0 border-[#c1beba] bg-[#f9f9f9] pt-px pl-[7px]"><svg class="mr-[9px] size-[14px]"><use href="#fc"/></svg><span class="tracking-[0.08px]">Sin nombre : 1*</span><svg class="ml-[11px] size-3" viewBox="0 0 12 12"><path d="M2 2l8 8m0-8l-8 8" stroke="#555" stroke-width="4"/></svg></div>
        </main>
      </div>
      <footer class="flex flex-1 items-center justify-end pt-[1px] pr-[3px] tracking-[0.1px]">95.47 x 89.75 mm</footer>
    </div>
  </div>

  <!-- Pieza menu -->
  <nav class="absolute top-6 left-[380px] flex w-[248px] flex-col bg-[#42413b] tracking-[0.22px] text-[#dfdbd2] shadow-[0_4px_22px_2px_rgba(0,0,0,0.42)] ring-1 ring-[#33322e] ring-inset">
    <div class="flex h-[23px] items-center pl-[26px]"><svg class="mr-[11px] size-4"><use href="#imp"/></svg>Importar CAD...</div>
    <div class="flex h-[23px] items-center pl-[26px] tracking-[0.4px]"><svg class="mr-[11px] size-4"><use href="#exp"/></svg>Exportar CAD...</div>
    <div class="mx-1 my-[3px] h-0.5 border-t border-[#3b3a35] bg-[#474640]"></div>
    <div class="flex h-[23px] items-center justify-between pr-1.5 pl-[26px] tracking-[0.35px]">Primitives<svg class="h-2.5 w-2"><use href="#chev"/></svg></div>
    <div class="flex h-[23px] items-center pl-[26px]"><svg class="mr-[11px] size-4"><use href="#prims"/></svg>Crear primitivas...</div>
    <div class="flex h-[23px] items-center pl-[26px]"><svg class="mr-[11px] size-4"><use href="#builder"/></svg>Generador de forma...</div>
    <div class="mx-1 my-[3px] h-0.5 border-t border-[#3b3a35] bg-[#474640]"></div>
    <div class="flex h-[23px] items-center pl-[26px] tracking-[0.13px] text-[#7e7c75]"><svg class="mr-[11px] size-4"><use href="#mesh"/></svg>Crear forma de malla...</div>
    <div class="flex h-[23px] items-center pl-[26px]">Convertir a sólido</div>
    <div class="flex h-[23px] items-center pl-[26px]">Invertir formas</div>
    <div class="flex h-[23px] items-center border-y border-[#dd5f31] bg-linear-to-b from-[#f58458] to-[#e86d3b] pl-[26px] text-white">Crear copia simple</div>
    <div class="flex h-[23px] items-center pl-[26px]"><svg class="mr-[11px] size-4"><use href="#refine"/></svg>Refinar la forma</div>
    <div class="flex h-[23px] items-center pl-[26px] tracking-[0.28px]"><svg class="mr-[11px] size-4"><use href="#check"/></svg>Verificar geometría</div>
    <div class="mx-1 my-[3px] h-0.5 border-t border-[#3b3a35] bg-[#474640]"></div>
    <div class="flex h-[23px] items-center justify-between pr-1.5 pl-[26px] tracking-[0.4px]">Booleano<svg class="h-2.5 w-2"><use href="#chev"/></svg></div>
    <div class="flex h-[23px] items-center justify-between pr-1.5 pl-[26px] tracking-[1px]">Join<svg class="h-2.5 w-2"><use href="#chev"/></svg></div>
    <div class="mx-1 my-[3px] h-0.5 border-t border-[#3b3a35] bg-[#474640]"></div>
    <div class="flex h-[23px] items-center pl-[26px] tracking-[0.28px]"><svg class="mr-[11px] size-4"><use href="#sect"/></svg>Cortes transversales...</div>
    <div class="flex h-[23px] items-center pl-[26px]">Crear cuerpo compuesto</div>
    <div class="flex h-[23px] items-center pl-[26px] tracking-[0.15px] text-[#7e7c75]">Crear cara a partir de croquis</div>
    <div class="flex h-[23px] items-center pl-[26px] tracking-[0.5px]"><svg class="mr-[11px] size-4"><use href="#extr"/></svg>Extruir...</div>
    <div class="flex h-[23px] items-center pl-[26px]"><svg class="mr-[11px] size-4"><use href="#revolve"/></svg>Girar...</div>
    <div class="flex h-[23px] items-center pl-[26px] tracking-[0.4px]"><svg class="mr-[11px] size-4"><use href="#mirror"/></svg>Duplicar...</div>
    <div class="flex h-[23px] items-center pl-[26px]"><svg class="mr-[11px] size-4"><use href="#fillet"/></svg>Redondeo...</div>
    <div class="flex h-[23px] items-center pl-[26px]"><svg class="mr-[11px] size-4"><use href="#chamf"/></svg>Chaflán...</div>
    <div class="flex h-[23px] items-center pl-[26px]"><svg class="mr-[11px] size-4"><use href="#ruled"/></svg>Crear superficie reglada</div>
    <div class="flex h-[23px] items-center pl-[26px]"><svg class="mr-[11px] size-4"><use href="#loft"/></svg>Proyección...</div>
    <div class="flex h-[23px] items-center pl-[26px]"><svg class="mr-[11px] size-4"><use href="#sweep"/></svg>Barrido...</div>
    <div class="flex h-[23px] items-center pl-[26px]"><svg class="mr-[11px] size-4"><use href="#offset"/></svg>Separación...</div>
    <div class="flex h-[23px] items-center pl-[26px] tracking-[0.4px]"><svg class="mr-[11px] size-4"><use href="#thick"/></svg>Espesor...</div>
  </nav>

  <!-- pointer -->
  <svg class="absolute top-[251px] left-[450px] h-[19px] w-3" viewBox="0 0 12 19"><path d="M1 1v14l3-3 3 6 2.500-1-3-6H11z" fill="#fff" stroke="#111"/></svg>
</div>
</body>
</html>
